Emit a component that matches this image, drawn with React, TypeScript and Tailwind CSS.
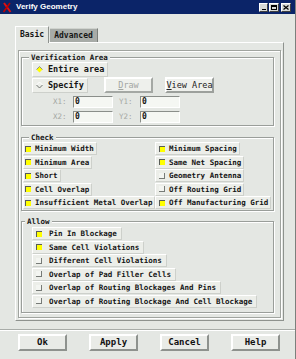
import type { ReactNode } from 'react';
import clsx from 'clsx';

const checkItems: [string, boolean, string, boolean][] = [
  ['Minimum Width', true, 'Minimum Spacing', true],
  ['Minimum Area', true, 'Same Net Spacing', true],
  ['Short', true, 'Geometry Antenna', false],
  ['Cell Overlap', true, 'Off Routing Grid', false],
  ['Insufficient Metal Overlap', true, 'Off Manufacturing Grid', true],
];

const allowItems: [string, boolean][] = [
  ['Pin In Blockage', true],
  ['Same Cell Violations', true],
  ['Different Cell Violations', false],
  ['Overlap of Pad Filler Cells', false],
  ['Overlap of Routing Blockages And Pins', false],
  ['Overlap of Routing Blockage And Cell Blockage', false],
];

function CheckBox({ on }: { on: boolean }) {
  if (on) {
    return <span className="block h-[6px] w-[6px] shrink-0 border-l border-t border-[#585c58] bg-[#ffff00]" />;
  }
  return <span className="block h-[6px] w-[6px] shrink-0 border-b border-r border-[#777b77] bg-[#f3f5f1]" />;
}

function Toggle({ label, on, className }: { label: string; on: boolean; className?: string }) {
  return (
    <div
      className={clsx(
        'flex h-[13px] w-fit items-center border border-b-[#cdd0cb] border-l-white border-r-[#cdd0cb] border-t-white bg-[#eceee9] pr-[2px]',
        className,
      )}
    >
      <CheckBox on={on} />
      <span className="whitespace-pre leading-[11px]">{label}</span>
    </div>
  );
}

function Group({ title, labelClass, className, children }: { title: string; labelClass: string; className?: string; children: ReactNode }) {
  return (
    <div className={clsx('relative border border-[#9a9e9a] shadow-[1px_1px_0_#ffffff,inset_1px_1px_0_#ffffff]', className)}>
      <span className={clsx('absolute top-[-5px] bg-[#e4e7e3] px-[2px] text-[7.5px] leading-[9px] font-bold', labelClass)}>{title}</span>
      {children}
    </div>
  );
}

function RadioOn() {
  return (
    <svg width="7" height="7" viewBox="0 0 7 7" className="shrink-0">
      <polygon points="3.5,0.5 6.5,3.5 3.5,6.5 0.5,3.5" fill="#ffff00" />
      <polyline points="0.5,3.5 3.5,0.5 6.5,3.5" fill="none" stroke="#8c908c" strokeWidth="1" />
    </svg>
  );
}

function RadioOff() {
  return (
    <svg width="7" height="7" viewBox="0 0 7 7" className="shrink-0">
      <polyline points="0.5,3 3.5,6 6.5,3" fill="none" stroke="#6f736f" strokeWidth="1" />
      <polyline points="0.5,3 3.5,0 6.5,3" fill="none" stroke="#ffffff" strokeWidth="1" />
    </svg>
  );
}

function NumInput() {
  return (
    <div className="h-[12px] w-[40px] border border-b-white border-l-[#8a8e8a] border-r-white border-t-[#8a8e8a] bg-[#f5f7f3] pl-[1px] text-[8px] leading-[10px] font-bold text-[#151515]">
      0
    </div>
  );
}

function PushButton({ label }: { label: string }) {
  return (
    <button className="flex h-[17px] w-[49px] items-center justify-center border-2 border-b-[#8e928e] border-l-white border-r-[#8e928e] border-t-white bg-[#e9ebe7] text-[9px] leading-[11px] font-bold text-[#111]">
      {label}
    </button>
  );
}

export default function App() {
  return (
    <div className="flex h-[359px] w-[296px] flex-col overflow-hidden border-r border-[#7c807c] bg-[#e4e7e3] font-['DejaVu_Sans_Mono',monospace] text-[#151515]">
      {/* title bar */}
      <div className="flex h-[14px] shrink-0 items-center bg-[#0b2468] pl-[2px] pr-[4px]">
        <svg width="10" height="11" viewBox="0 0 10 11" className="shrink-0">
          <path d="M2 1 L8.5 10" stroke="#e01010" strokeWidth="2" />
          <path d="M8 1 L1.5 10" stroke="#c00000" strokeWidth="1.6" />
        </svg>
        <span className="ml-[4px] font-['Liberation_Sans',Arial,sans-serif] text-[8px] leading-[10px] font-bold text-white">Verify Geometry</span>
        <div className="ml-auto flex gap-[1px]">
          <span className="flex h-[9px] w-[9px] items-end justify-center border border-b-[#404040] border-l-white border-r-[#404040] border-t-white bg-[#d8dad6] pb-[1px]">
            <span className="block h-[1px] w-[4px] bg-black" />
          </span>
          <span className="flex h-[9px] w-[10px] items-center justify-center border border-b-[#404040] border-l-white border-r-[#404040] border-t-white bg-[#d8dad6]">
            <span className="block h-[5px] w-[6px] border border-t-2 border-black" />
          </span>
          <span className="ml-[1px] flex h-[9px] w-[10px] items-center justify-center border border-b-[#404040] border-l-white border-r-[#404040] border-t-white bg-[#d8dad6]">
            <svg width="6" height="5" viewBox="0 0 6 5">
              <path d="M0.5 0.5 L5.5 4.5 M5.5 0.5 L0.5 4.5" stroke="#000" strokeWidth="1.2" />
            </svg>
          </span>
        </div>
      </div>

      {/* tabs */}
      <div className="mt-[12px] flex h-[16px] items-end pl-[15px]">
        <div className="relative z-10 mb-[-1px] flex h-[17px] w-[34px] items-center justify-center border-l border-r border-t border-b-0 border-l-white border-r-[#8e928e] border-t-white bg-[#e4e7e3] text-[8px] font-bold leading-[10px]">
          Basic
        </div>
        <div className="ml-[1px] flex h-[14px] w-[48px] items-center justify-center border-r border-t border-r-[#7a7e7a] border-t-[#d0d3ce] bg-[#a7aba7] text-[8px] font-bold leading-[10px]">
          Advanced
        </div>
      </div>

      {/* panel */}
      <div className="ml-[15px] h-[279px] w-[269px] shrink-0 border border-b-[#8e928e] border-l-white border-r-[#8e928e] border-t-white px-[2px] pb-[2px] pt-[7px]">
        <div className="h-full border border-[#a0a49f] pl-[2px] pr-[6px] pt-[6px] shadow-[1px_1px_0_#ffffff,inset_1px_1px_0_#ffffff]">
          <Group title="Verification Area" labelClass="left-[7px]" className="h-[69px]">
            <div className="pl-[10px] pt-[4px]">
              <div className="flex h-[15px] w-[76px] items-center gap-[5px] border border-b-[#cdd0cb] border-l-white border-r-[#cdd0cb] border-t-white bg-[#eceee9] pl-[3px] text-[8.5px] font-bold leading-[11px]">
                <RadioOn />
                <span className="whitespace-nowrap">Entire area</span>
              </div>
              <div className="flex h-[16px] items-end">
                <div className="flex h-[15px] w-[56px] items-center gap-[5px] border border-b-[#cdd0cb] border-l-white border-r-[#cdd0cb] border-t-white bg-[#eceee9] pl-[3px] text-[8.5px] font-bold leading-[11px]">
                  <RadioOff />
                  <span className="whitespace-nowrap">Specify</span>
                </div>
                <div className="ml-[16px] flex h-[16px] w-[49px] items-center justify-center border-2 border-b-[#a4a8a4] border-l-white border-r-[#a4a8a4] border-t-white bg-[#eef0ec] text-[8.5px] leading-[11px] text-[#a2a6a2]">
                  <span className="whitespace-nowrap">
                    <span className="underline underline-offset-1">D</span>raw
                  </span>
                </div>
                <div className="ml-[12px] flex h-[16px] w-[49px] items-center justify-center border-2 border-b-[#9ca09c] border-l-white border-r-[#9ca09c] border-t-white bg-[#eef0ec] text-[8.5px] leading-[11px] text-[#222]">
                  <span className="whitespace-nowrap">
                    <span className="underline underline-offset-1">V</span>iew Area
                  </span>
                </div>
              </div>
              <div className="mt-[3px] flex h-[12px] items-center pl-[21px] text-[7.5px] leading-[10px] text-[#a4a8a4]">
                <span className="w-[20px]">X1:</span>
                <NumInput />
                <span className="ml-[6px] w-[21px]">Y1:</span>
                <NumInput />
              </div>
              <div className="mt-[3px] flex h-[12px] items-center pl-[21px] text-[7.5px] leading-[10px] text-[#a4a8a4]">
                <span className="w-[20px]">X2:</span>
                <NumInput />
                <span className="ml-[6px] w-[21px]">Y2:</span>
                <NumInput />
              </div>
            </div>
          </Group>

          <Group title="Check" labelClass="left-[7px]" className="mt-[11px] h-[74px]">
            <div className="grid auto-rows-[13.5px] grid-cols-[132px_1fr] pl-[1px] pt-[4px] text-[7.5px] font-bold">
              {checkItems.map(([l, lOn, r, rOn]) => (
                <div key={l} className="contents">
                  <Toggle label={l} on={lOn} className="gap-[4px] pl-[1px]" />
                  <Toggle label={r} on={rOn} className="gap-[4px] pl-[3px]" />
                </div>
              ))}
            </div>
          </Group>

          <Group title="Allow" labelClass="left-[3px]" className="mt-[10px] h-[92px]">
            <div className="grid auto-rows-[13.5px] pl-[10px] pt-[5px] text-[7.5px] font-bold">
              {allowItems.map(([label, on]) => (
                <Toggle key={label} label={label} on={on} className="gap-[7px] pl-[3px] pr-[4px]" />
              ))}
            </div>
          </Group>
        </div>
      </div>

      {/* separator */}
      <div className="mt-[8px] h-[1px] w-full bg-[#a8aca8]" />
      <div className="h-[1px] w-full bg-white" />

      {/* buttons */}
      <div className="mt-[3px] flex gap-[22px] pl-[18px]">
        <PushButton label="Ok" />
        <PushButton label="Apply" />
        <PushButton label="Cancel" />
        <PushButton label="Help" />
      </div>
    </div>
  );
}
